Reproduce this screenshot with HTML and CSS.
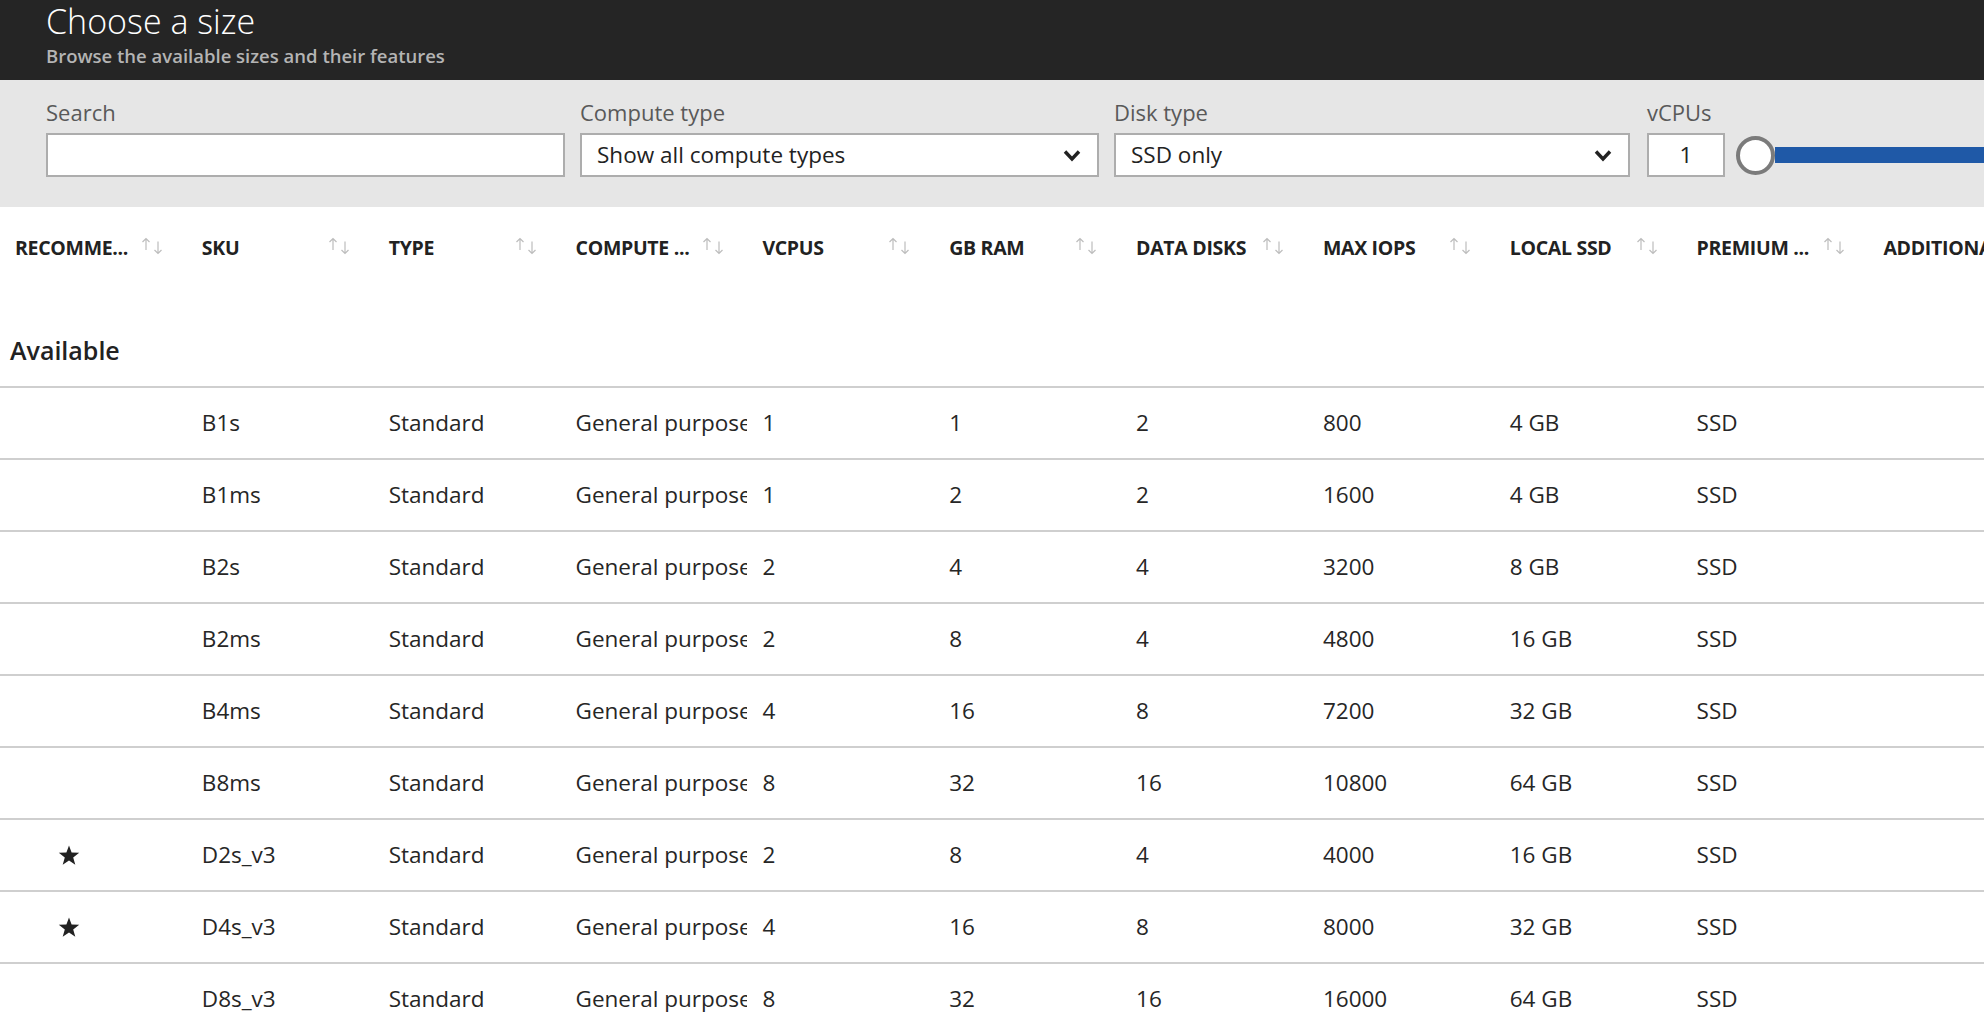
FILE: index.html
```html
<!DOCTYPE html>
<html lang="en">
<head>
<meta charset="utf-8">
<title>Choose a size</title>
<link rel="stylesheet" href="styles.css">
</head>
<body>
<header class="blade-header">
  <h1 class="blade-title">Choose a size</h1>
  <p class="blade-subtitle">Browse the available sizes and their features</p>
</header>

<section class="filters">
  <div class="field field-search">
    <label class="field-label" for="search">Search</label>
    <input class="textbox" id="search" type="text">
  </div>
  <div class="field field-compute">
    <span class="field-label">Compute type</span>
    <div class="dropdown">
      <span class="dropdown-value">Show all compute types</span>
      <svg class="chevron" width="18" height="13" viewBox="0 0 18 13"><polyline points="2,2.5 9,10 16,2.5" fill="none" stroke="#222" stroke-width="3.4" stroke-linejoin="miter"/></svg>
    </div>
  </div>
  <div class="field field-disk">
    <span class="field-label">Disk type</span>
    <div class="dropdown">
      <span class="dropdown-value">SSD only</span>
      <svg class="chevron" width="18" height="13" viewBox="0 0 18 13"><polyline points="2,2.5 9,10 16,2.5" fill="none" stroke="#222" stroke-width="3.4" stroke-linejoin="miter"/></svg>
    </div>
  </div>
  <div class="field field-vcpu">
    <span class="field-label">vCPUs</span>
    <div class="vcpu-row">
      <div class="numbox">1</div>
      <div class="slider">
        <span class="slider-thumb"></span>
        <span class="slider-track"></span>
      </div>
    </div>
  </div>
</section>

<section class="sizes">
  <div class="row head">
    <div class="hcell"><span class="hlabel" title="Recommended">RECOMME...</span><svg class="sort" width="24" height="18" viewBox="0 0 24 18"><path d="M5 13V1.5M1.5 5L5 1.5L8.5 5M17 4.5V16.5M13.5 13L17 16.5L20.5 13" fill="none" stroke="#bdbdbd" stroke-width="1.2"/></svg></div>
    <div class="hcell"><span class="hlabel">SKU</span><svg class="sort" width="24" height="18" viewBox="0 0 24 18"><path d="M5 13V1.5M1.5 5L5 1.5L8.5 5M17 4.5V16.5M13.5 13L17 16.5L20.5 13" fill="none" stroke="#bdbdbd" stroke-width="1.2"/></svg></div>
    <div class="hcell"><span class="hlabel">TYPE</span><svg class="sort" width="24" height="18" viewBox="0 0 24 18"><path d="M5 13V1.5M1.5 5L5 1.5L8.5 5M17 4.5V16.5M13.5 13L17 16.5L20.5 13" fill="none" stroke="#bdbdbd" stroke-width="1.2"/></svg></div>
    <div class="hcell"><span class="hlabel" title="Compute type">COMPUTE ...</span><svg class="sort" width="24" height="18" viewBox="0 0 24 18"><path d="M5 13V1.5M1.5 5L5 1.5L8.5 5M17 4.5V16.5M13.5 13L17 16.5L20.5 13" fill="none" stroke="#bdbdbd" stroke-width="1.2"/></svg></div>
    <div class="hcell"><span class="hlabel">VCPUS</span><svg class="sort" width="24" height="18" viewBox="0 0 24 18"><path d="M5 13V1.5M1.5 5L5 1.5L8.5 5M17 4.5V16.5M13.5 13L17 16.5L20.5 13" fill="none" stroke="#bdbdbd" stroke-width="1.2"/></svg></div>
    <div class="hcell"><span class="hlabel">GB RAM</span><svg class="sort" width="24" height="18" viewBox="0 0 24 18"><path d="M5 13V1.5M1.5 5L5 1.5L8.5 5M17 4.5V16.5M13.5 13L17 16.5L20.5 13" fill="none" stroke="#bdbdbd" stroke-width="1.2"/></svg></div>
    <div class="hcell"><span class="hlabel">DATA DISKS</span><svg class="sort" width="24" height="18" viewBox="0 0 24 18"><path d="M5 13V1.5M1.5 5L5 1.5L8.5 5M17 4.5V16.5M13.5 13L17 16.5L20.5 13" fill="none" stroke="#bdbdbd" stroke-width="1.2"/></svg></div>
    <div class="hcell"><span class="hlabel">MAX IOPS</span><svg class="sort" width="24" height="18" viewBox="0 0 24 18"><path d="M5 13V1.5M1.5 5L5 1.5L8.5 5M17 4.5V16.5M13.5 13L17 16.5L20.5 13" fill="none" stroke="#bdbdbd" stroke-width="1.2"/></svg></div>
    <div class="hcell"><span class="hlabel">LOCAL SSD</span><svg class="sort" width="24" height="18" viewBox="0 0 24 18"><path d="M5 13V1.5M1.5 5L5 1.5L8.5 5M17 4.5V16.5M13.5 13L17 16.5L20.5 13" fill="none" stroke="#bdbdbd" stroke-width="1.2"/></svg></div>
    <div class="hcell"><span class="hlabel" title="Premium disk support">PREMIUM ...</span><svg class="sort" width="24" height="18" viewBox="0 0 24 18"><path d="M5 13V1.5M1.5 5L5 1.5L8.5 5M17 4.5V16.5M13.5 13L17 16.5L20.5 13" fill="none" stroke="#bdbdbd" stroke-width="1.2"/></svg></div>
    <div class="hcell"><span class="hlabel">ADDITIONAL FEATURES</span></div>
  </div>

  <div class="group">Available</div>

  <div class="row data"><div class="cell star"></div><div class="cell">B1s</div><div class="cell">Standard</div><div class="cell">General purpose</div><div class="cell">1</div><div class="cell">1</div><div class="cell">2</div><div class="cell">800</div><div class="cell">4 GB</div><div class="cell">SSD</div><div class="cell"></div></div>
  <div class="row data"><div class="cell star"></div><div class="cell">B1ms</div><div class="cell">Standard</div><div class="cell">General purpose</div><div class="cell">1</div><div class="cell">2</div><div class="cell">2</div><div class="cell">1600</div><div class="cell">4 GB</div><div class="cell">SSD</div><div class="cell"></div></div>
  <div class="row data"><div class="cell star"></div><div class="cell">B2s</div><div class="cell">Standard</div><div class="cell">General purpose</div><div class="cell">2</div><div class="cell">4</div><div class="cell">4</div><div class="cell">3200</div><div class="cell">8 GB</div><div class="cell">SSD</div><div class="cell"></div></div>
  <div class="row data"><div class="cell star"></div><div class="cell">B2ms</div><div class="cell">Standard</div><div class="cell">General purpose</div><div class="cell">2</div><div class="cell">8</div><div class="cell">4</div><div class="cell">4800</div><div class="cell">16 GB</div><div class="cell">SSD</div><div class="cell"></div></div>
  <div class="row data"><div class="cell star"></div><div class="cell">B4ms</div><div class="cell">Standard</div><div class="cell">General purpose</div><div class="cell">4</div><div class="cell">16</div><div class="cell">8</div><div class="cell">7200</div><div class="cell">32 GB</div><div class="cell">SSD</div><div class="cell"></div></div>
  <div class="row data"><div class="cell star"></div><div class="cell">B8ms</div><div class="cell">Standard</div><div class="cell">General purpose</div><div class="cell">8</div><div class="cell">32</div><div class="cell">16</div><div class="cell">10800</div><div class="cell">64 GB</div><div class="cell">SSD</div><div class="cell"></div></div>
  <div class="row data"><div class="cell star"><svg class="star-icon" width="22" height="21" viewBox="0 0 22 21"><polygon points="11,0.5 13.6,7.6 21.2,7.8 15.2,12.5 17.3,19.8 11,15.5 4.7,19.8 6.8,12.5 0.8,7.8 8.4,7.6" fill="#222"/></svg></div><div class="cell">D2s_v3</div><div class="cell">Standard</div><div class="cell">General purpose</div><div class="cell">2</div><div class="cell">8</div><div class="cell">4</div><div class="cell">4000</div><div class="cell">16 GB</div><div class="cell">SSD</div><div class="cell"></div></div>
  <div class="row data"><div class="cell star"><svg class="star-icon" width="22" height="21" viewBox="0 0 22 21"><polygon points="11,0.5 13.6,7.6 21.2,7.8 15.2,12.5 17.3,19.8 11,15.5 4.7,19.8 6.8,12.5 0.8,7.8 8.4,7.6" fill="#222"/></svg></div><div class="cell">D4s_v3</div><div class="cell">Standard</div><div class="cell">General purpose</div><div class="cell">4</div><div class="cell">16</div><div class="cell">8</div><div class="cell">8000</div><div class="cell">32 GB</div><div class="cell">SSD</div><div class="cell"></div></div>
  <div class="row data"><div class="cell star"></div><div class="cell">D8s_v3</div><div class="cell">Standard</div><div class="cell">General purpose</div><div class="cell">8</div><div class="cell">32</div><div class="cell">16</div><div class="cell">16000</div><div class="cell">64 GB</div><div class="cell">SSD</div><div class="cell"></div></div>
</section>
</body>
</html>
```

FILE: styles.css
```css
* { box-sizing: border-box; }

html, body {
  margin: 0;
  padding: 0;
  background: #ffffff;
  overflow: hidden;
}

body {
  width: 1984px;
  height: 1020px;
  font-family: "Open Sans", "Noto Sans", "DejaVu Sans", sans-serif;
  color: #222222;
}

/* ---------- header bar ---------- */
.blade-header {
  height: 80px;
  background: #252525;
  padding: 1px 46px 0;
}

.blade-title {
  margin: 0;
  font-size: 34px;
  font-weight: 300;
  line-height: 40px;
  color: #ffffff;
}

.blade-subtitle {
  margin: 3px 0 0;
  font-size: 18.5px;
  font-weight: 600;
  line-height: 24px;
  color: #b4b4b4;
}

/* ---------- filter panel ---------- */
.filters {
  display: flex;
  gap: 15px;
  height: 127px;
  padding: 17px 0 0 46px;
  background: #e6e6e6;
}

.field {
  display: flex;
  flex-direction: column;
}

.field-search { width: 519px; }
.field-compute { width: 519px; }
.field-disk { width: 516px; }
.field-vcpu { flex: 1; margin-left: 2px; }

.field-label {
  font-size: 22px;
  line-height: 30px;
  color: #595959;
  margin-bottom: 6px;
  white-space: nowrap;
}

.textbox {
  display: block;
  width: 100%;
  height: 44px;
  margin: 0;
  border: 2px solid #adadad;
  background: #ffffff;
  outline: none;
  font: inherit;
}

.dropdown {
  display: flex;
  align-items: center;
  justify-content: space-between;
  height: 44px;
  padding: 0 16px 0 15px;
  border: 2px solid #adadad;
  background: #ffffff;
  font-size: 22.5px;
  color: #222222;
}

.dropdown-value {
  line-height: 40px;
  white-space: nowrap;
}

.chevron { display: block; }

.vcpu-row {
  display: flex;
  align-items: center;
}

.numbox {
  width: 78px;
  height: 44px;
  border: 2px solid #adadad;
  background: #ffffff;
  font-size: 22.5px;
  line-height: 40px;
  text-align: center;
  color: #222222;
  flex: none;
}

.slider {
  flex: 1;
  display: flex;
  align-items: center;
  margin-left: 11px;
}

.slider-thumb {
  flex: none;
  width: 39px;
  height: 39px;
  border: 4px solid #7b7b7b;
  border-radius: 50%;
  background: #ffffff;
}

.slider-track {
  flex: 1;
  height: 16px;
  background: #1f59a7;
}

/* ---------- size grid ---------- */
.sizes {
  width: 2060px;
}

.row {
  display: grid;
  grid-template-columns: repeat(11, 186.85px);
}

.head {
  padding-top: 29px;
}

.hcell {
  display: flex;
  align-items: flex-start;
  padding-left: 15px;
  min-height: 24px;
}

.hlabel {
  width: 126px;
  flex: none;
  font-size: 19.5px;
  font-weight: 700;
  line-height: 24px;
  letter-spacing: -0.3px;
  color: #222222;
  white-space: nowrap;
}

.sort {
  display: block;
  flex: none;
  margin-top: 1px;
}

.group {
  padding: 73px 0 19px 10px;
  font-size: 25px;
  font-weight: 600;
  line-height: 34px;
  color: #222222;
  border-bottom: 2px solid #cfcfcf;
}

.data {
  height: 72px;
  border-bottom: 2px solid #cfcfcf;
}

.cell {
  padding: 0 8px 0 15px;
  font-size: 22.5px;
  line-height: 70px;
  color: #262626;
  white-space: nowrap;
  overflow: hidden;
}

.cell.star {
  display: flex;
  align-items: center;
  padding-left: 58px;
}

.star-icon { display: block; }
```
